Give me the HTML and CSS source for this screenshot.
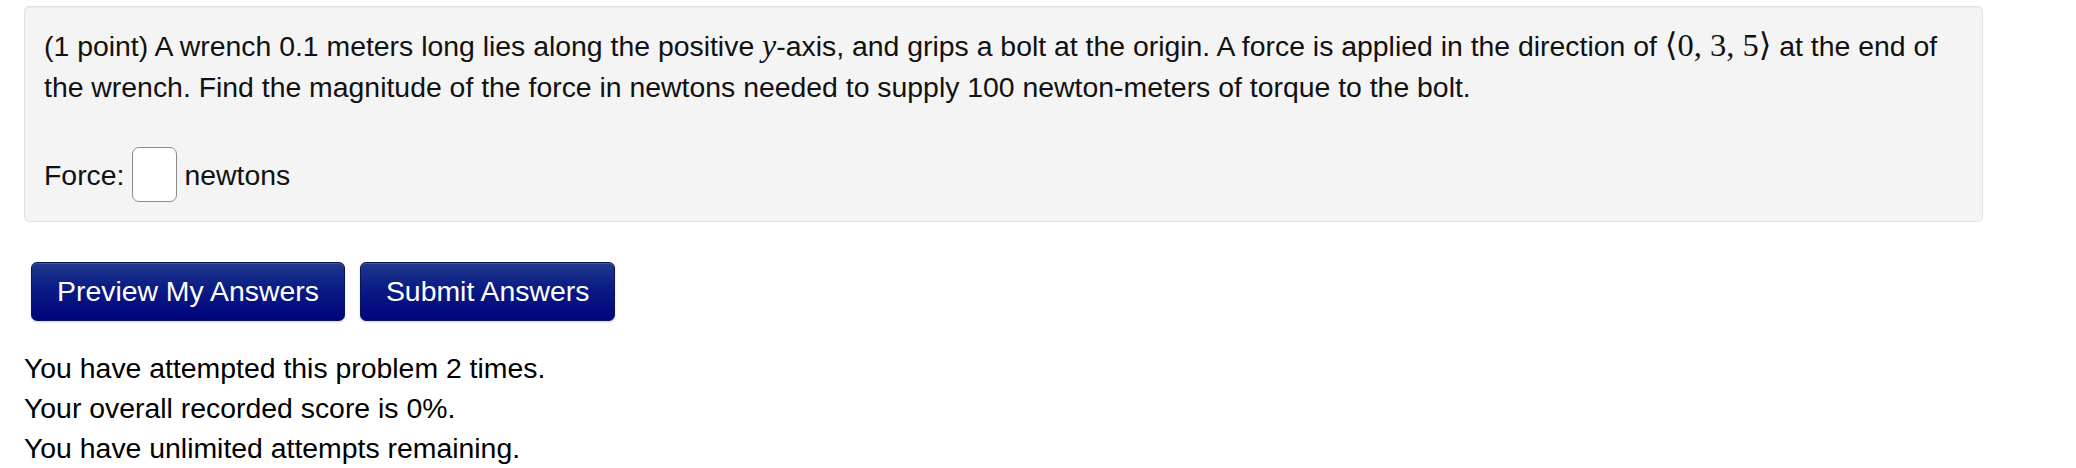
FILE: index.html
```html
<!DOCTYPE html>
<html>
<head>
<meta charset="utf-8">
<link rel="stylesheet" href="styles.css">
</head>
<body>
<div class="page">
  <div class="well">
    <p class="problem">(1 point) A wrench 0.1 meters long lies along the positive <span class="mi">y</span>-axis, and grips a bolt at the origin. A force is applied in the direction of <span class="math"><span class="ang">⟨</span>0, 3, 5<span class="ang">⟩</span></span> at the end of the wrench. Find the magnitude of the force in newtons needed to supply 100 newton-meters of torque to the bolt.</p>
    <div class="answer-row">
      <span>Force:</span>
      <input class="answer" type="text">
      <span>newtons</span>
    </div>
  </div>
  <div class="buttons">
    <button class="btn">Preview My Answers</button>
    <button class="btn">Submit Answers</button>
  </div>
  <div class="status">
    <div>You have attempted this problem 2 times.</div>
    <div>Your overall recorded score is 0%.</div>
    <div>You have unlimited attempts remaining.</div>
  </div>
</div>
</body>
</html>
```
FILE: styles.css
```css
html, body {
  margin: 0;
  padding: 0;
  background: #fff;
}
body {
  font-family: "Liberation Sans", Arial, sans-serif;
  font-size: 28.4px;
  line-height: 40px;
  color: #111;
}
.page {
  padding: 6px 0 0 24px;
  width: 1959px;
}
.well {
  background: #f4f4f4;
  border: 1px solid #e1e1e1;
  border-radius: 5px;
  padding: 19px;
  box-shadow: inset 0 1px 1px rgba(0,0,0,0.04);
}
.problem {
  margin: 0;
  line-height: 41px;
}
.mi {
  font-family: "Liberation Serif", "DejaVu Serif", serif;
  font-style: italic;
  font-size: 32px;
  line-height: 0;
}
.math {
  font-family: "Liberation Serif", "DejaVu Serif", serif;
  font-size: 32.5px;
  line-height: 0;
}
.ang {
  font-family: "DejaVu Serif", serif;
  font-weight: 300;
}
.answer-row {
  margin-top: 39px;
  display: flex;
  align-items: center;
  height: 55px;
}
.answer {
  width: 45px;
  height: 55px;
  box-sizing: border-box;
  margin: 0 7px 0 8px;
  border: 1.5px solid #8a8a8a;
  border-radius: 7px;
  background: #fff;
  padding: 0;
}
.buttons {
  display: flex;
  gap: 15px;
  margin: 40px 0 0 7px;
}
.btn {
  font-family: "Liberation Sans", Arial, sans-serif;
  font-size: 28.4px;
  color: #fff;
  height: 59px;
  padding: 0 25px;
  border: 1px solid #0a1560;
  border-radius: 6px;
  background: linear-gradient(to bottom, #1d3a8c 0%, #0a1b84 45%, #00047d 100%);
  box-shadow: inset 0 1px 0 rgba(255,255,255,0.15), 0 1px 2px rgba(0,0,0,0.2);
}
.status {
  margin-top: 27px;
  line-height: 40px;
  color: #000;
}
```
